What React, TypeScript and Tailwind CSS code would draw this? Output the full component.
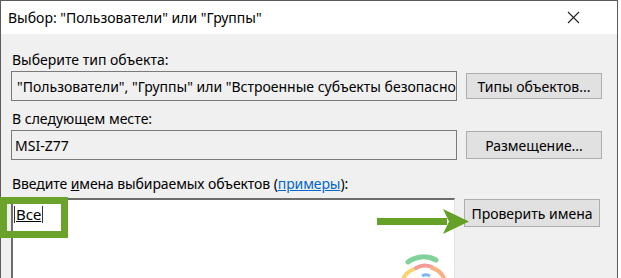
import React from 'react'

const font = { fontFamily: '"Noto Sans", "Open Sans", sans-serif' }

function Button({ children, className = '' }: { children: React.ReactNode; className?: string }) {
  return (
    <div
      className={`w-[136px] flex items-center justify-center bg-[#e1e1e1] border border-[#adadad] text-[14px] text-black ${className}`}
    >
      {children}
    </div>
  )
}

function Logo() {
  // partial watermark arcs at the bottom of the names box
  return (
    <svg width="70" height="40" viewBox="0 0 70 40" className="absolute left-[392px] top-[252px]">
      <path d="M16 10 A 26 26 0 0 1 44 8" stroke="#7fd39a" strokeWidth="5" fill="none" strokeLinecap="round" />
      <path d="M10 30 A 20 20 0 0 1 22 17" stroke="#f6d36b" strokeWidth="4" fill="none" strokeLinecap="round" />
      <path d="M24 16 A 18 18 0 0 1 40 15" stroke="#f59a9a" strokeWidth="4" fill="none" strokeLinecap="round" />
      <path d="M40 16 A 18 18 0 0 1 52 26" stroke="#f7b183" strokeWidth="4" fill="none" strokeLinecap="round" />
      <path d="M53 28 L56 36" stroke="#ef5d5d" strokeWidth="4" fill="none" strokeLinecap="round" />
      <path d="M30 24 A 8 8 0 0 1 38 24" stroke="#7db8f0" strokeWidth="3" fill="none" />
    </svg>
  )
}

export default function App() {
  return (
    <div style={font} className="relative w-[621px] h-[278px] overflow-hidden bg-white text-black">
      <div className="h-full flex flex-col border-t border-l border-r border-[#5b5b5b] w-[618px]">
        {/* title bar */}
        <div className="h-[40px] bg-white flex items-center justify-between pl-[7px] pr-[37px]">
          <span className="text-[14px] leading-none">Выбор: "Пользователи" или "Группы"</span>
          <svg width="13" height="13" viewBox="0 0 13 13">
            <path d="M1 1 L12 12 M12 1 L1 12" stroke="#222" strokeWidth="1.1" />
          </svg>
        </div>

        {/* body */}
        <div className="flex-1 bg-[#f0f0f0] pl-[10px] pt-[16px] text-[14px]">
          <div className="leading-[20px] pl-[1px]">Выберите тип объекта:</div>
          <div className="mt-[1px] flex items-center gap-[9px]">
            <div className="w-[446px] h-[30px] border border-[#7a7a7a] bg-[#f0f0f0] flex items-center pl-[5px] overflow-hidden whitespace-nowrap">
              "Пользователи", "Группы" или "Встроенные субъекты безопасности"
            </div>
            <Button className="h-[26px]">Типы объектов...</Button>
          </div>

          <div className="mt-[8px] leading-[20px] pl-[1px]">В следующем месте:</div>
          <div className="mt-[1px] flex items-center gap-[9px]">
            <div className="w-[446px] h-[30px] border border-[#7a7a7a] bg-[#f0f0f0] flex items-center pl-[3px]">
              MSI-Z77
            </div>
            <Button className="h-[28px]">Размещение...</Button>
          </div>

          <div className="mt-[14px] leading-[20px] pl-[1px] tracking-[-0.1px]">
            Введите <span className="underline">и</span>мена выбираемых объектов (
            <span className="text-[#0066cc] underline">примеры</span>):
          </div>
          <div className="mt-[4px] flex items-start gap-[9px]">
            <div className="w-[444px] h-[80px] bg-white border-t-2 border-l-2 border-[#6d6d6d] border-r border-r-[#e3e3e3] pl-[1px] pt-[4px]">
              <span className="inline-block border-l border-[#333] pl-[1px] pr-[1px] border-r leading-[17px] underline text-[15px]">
                Все
              </span>
            </div>
            <Button className="h-[28px] mt-[1px]">Проверить имена</Button>
          </div>
        </div>
      </div>

      {/* annotations */}
      <div className="absolute left-0 top-[197px] w-[68px] h-[41px] border-[7px] border-[#6aa22c]" />
      <svg width="95" height="26" viewBox="0 0 95 26" className="absolute left-[377px] top-[209px]">
        <rect x="0" y="9" width="70" height="7" fill="#66a127" />
        <polygon points="66,0 92,12.5 66,25 72,12.5" fill="#66a127" />
      </svg>
      <Logo />
    </div>
  )
}
